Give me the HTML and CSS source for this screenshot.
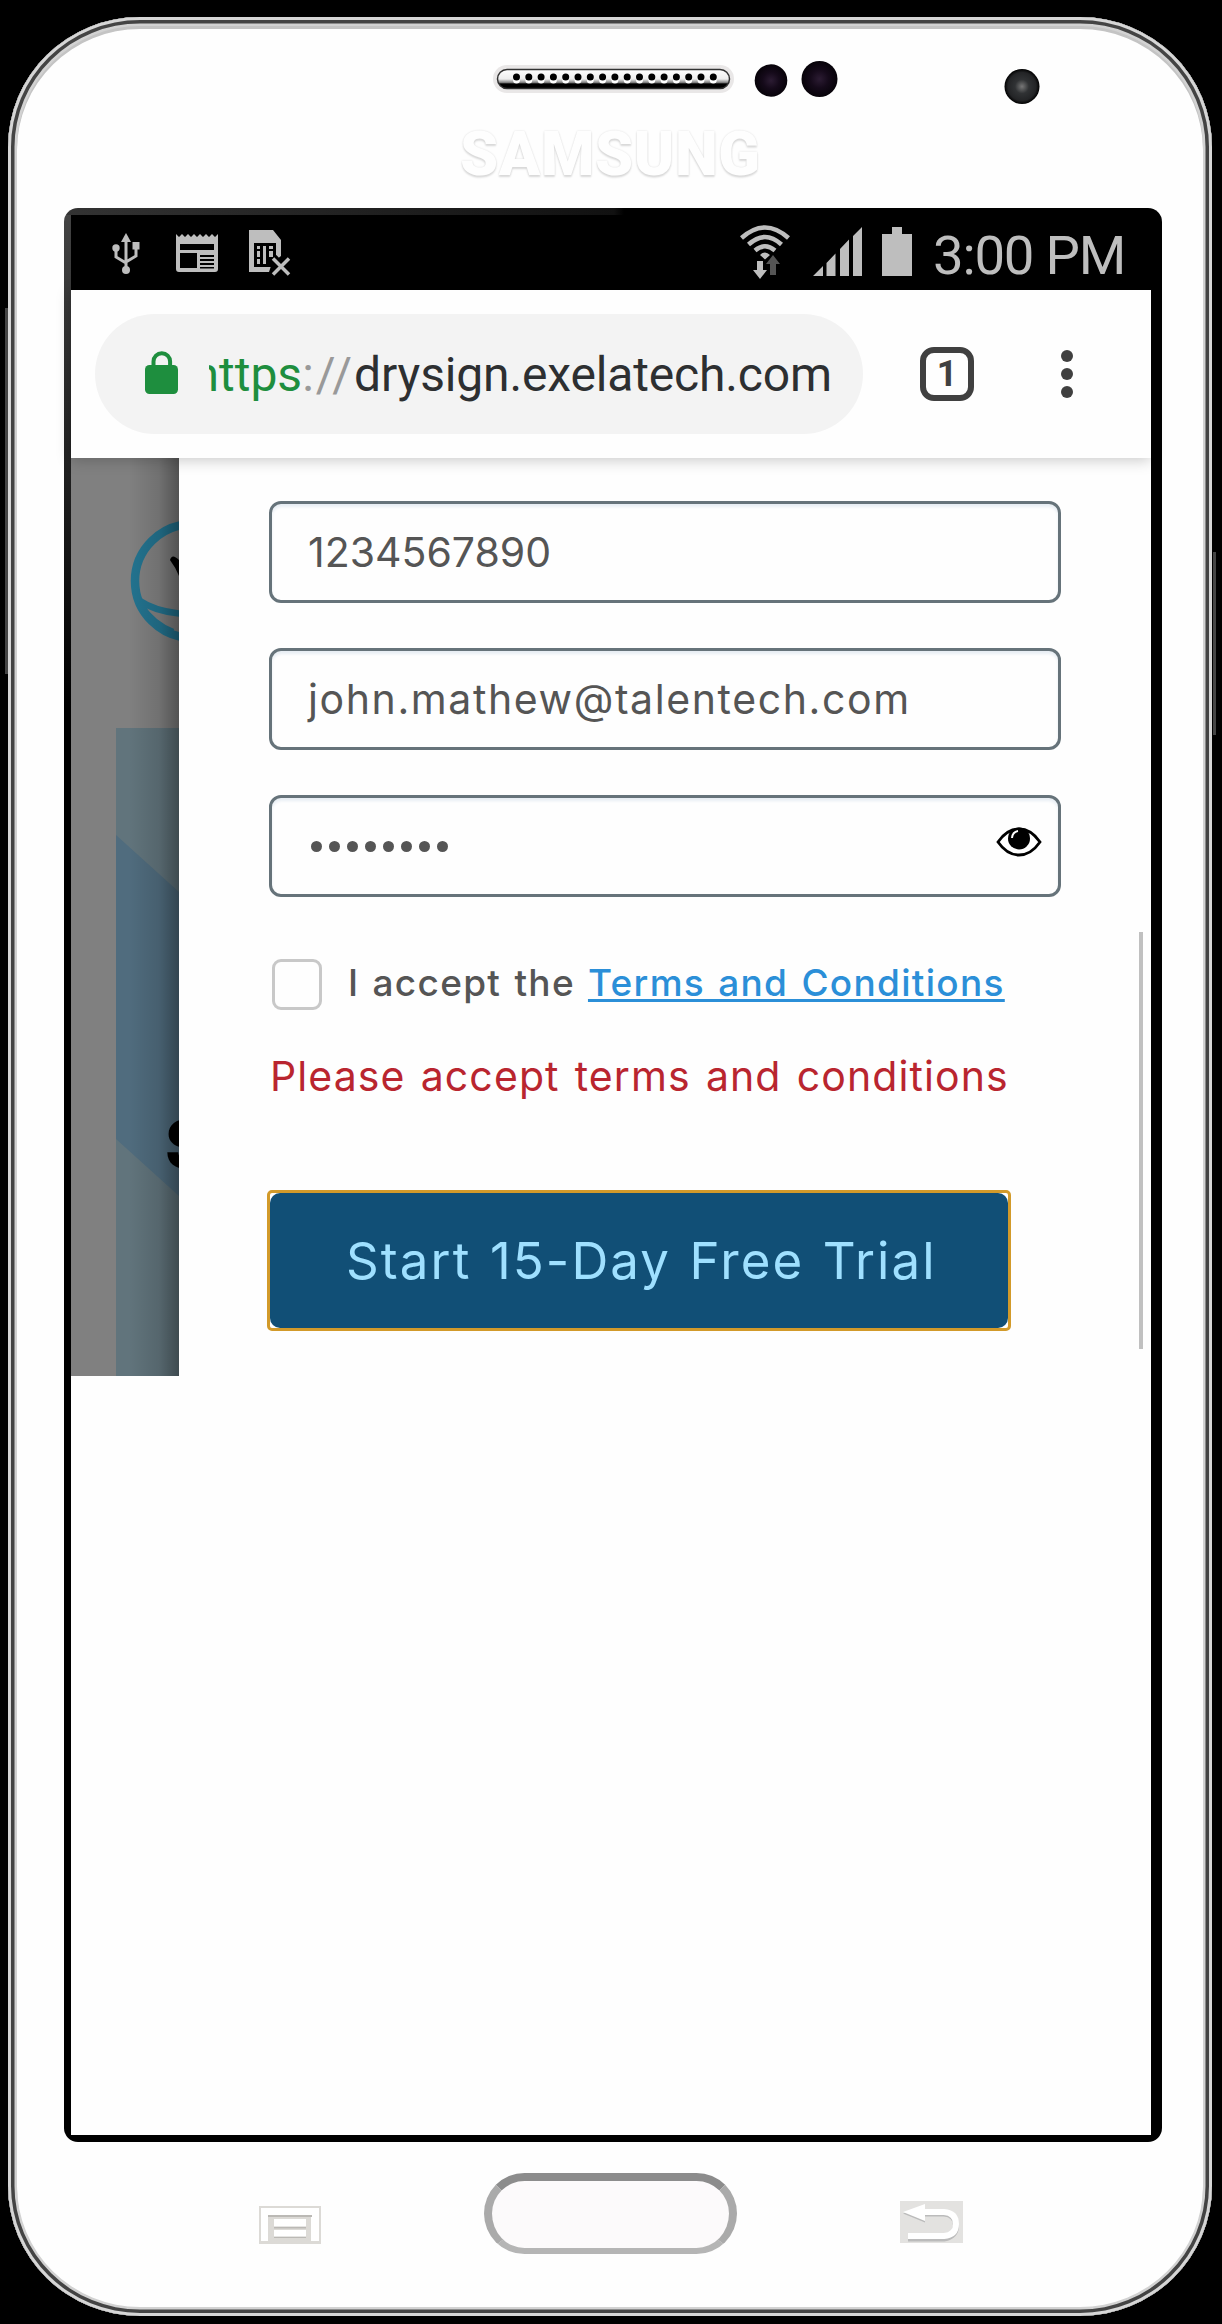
FILE: index.html
```html
<!DOCTYPE html>
<html lang="en">
<head>
<meta charset="utf-8">
<title>DrySign</title>
<link rel="stylesheet" href="styles.css">
</head>
<body>
<div class="phone">
  <i class="side-key side-key-left"></i>
  <i class="side-key side-key-right"></i>
  <svg class="hardware" viewBox="8 17 1204 107" width="1204" height="107" aria-hidden="true">
    <defs>
      <linearGradient id="grille" x1="0" y1="0" x2="0" y2="1">
        <stop offset="0" stop-color="#fff"/><stop offset=".5" stop-color="#eee"/>
        <stop offset=".68" stop-color="#888"/><stop offset=".76" stop-color="#000"/><stop offset="1" stop-color="#000"/>
      </linearGradient>
      <radialGradient id="lens"><stop offset="0" stop-color="#2c1c33"/><stop offset=".5" stop-color="#150a1a"/><stop offset="1" stop-color="#070309"/></radialGradient>
      <radialGradient id="camera"><stop offset="0" stop-color="#777"/><stop offset=".4" stop-color="#303234"/><stop offset=".8" stop-color="#232426"/><stop offset="1" stop-color="#000"/></radialGradient>
    </defs>
    <rect x="493" y="65" width="241" height="28" rx="14" fill="#e9e7e7"/>
    <rect x="497.500" y="69.500" width="232" height="19" rx="9.500" fill="url(#grille)" stroke="#333" stroke-width="1.500"/>
    <path d="M516.500 80H713.500" stroke="#fff" stroke-width="7" stroke-linecap="round" stroke-dasharray="0 12.300"/>
    <path d="M516.500 77H713.500" stroke="#000" stroke-width="7" stroke-linecap="round" stroke-dasharray="0 12.300"/>
    <circle cx="771" cy="80.500" r="16.300" fill="url(#lens)"/>
    <circle cx="819.500" cy="79" r="18" fill="url(#lens)"/>
    <circle cx="1022" cy="86.500" r="17.500" fill="url(#camera)"/>
  </svg>
  <div class="brand"><span>SAMSUNG</span></div>

  <div class="glass">
    <div class="screen">
      <div class="status">
        <svg width="30" height="44" viewBox="0 0 30 44" fill="#bebebe" stroke="#bebebe" class="usb">
          <path d="M15 1l5 9h-10z" stroke="none"/><path d="M15 8v30M5 17v8l10 6M25 16v8l-10 6" fill="none" stroke-width="3"/>
          <circle cx="5" cy="16" r="3.700" stroke="none"/><path d="M21.500 10h7v7.500h-7z" stroke="none"/><circle cx="15" cy="38" r="4" stroke="none"/>
        </svg>
        <svg width="42" height="40" viewBox="0 0 42 40" class="news">
          <path fill="#bebebe" d="M0 1l3 3 3-3 3 3 3-3 3 3 3-3 3 3 3-3 3 3 3-3 3 3 3-3 3 3 3-3V36q0 3-3 3H3q-3 0-3-3z"/>
          <path d="M4 11h34v6H4zM4 20h17v15H4zM24 22h14v2H24zM24 26h14v2H24zM24 30h14v2H24zM24 34h14v1.500H24z"/>
        </svg>
        <svg width="44" height="48" viewBox="0 0 44 48" class="sim">
          <path fill="#bebebe" d="M1 1h24l8 10v16l-9 7-3 9H1z"/>
          <path d="M6 14h22v24H6z"/>
          <path fill="#bebebe" d="M9 17h3v3H9zM9 22h3v6H9zM9 30h3v5H9zM15 17h3v18h-3zM21 17h4v3h-4zM21 22h4v6h-4z"/>
          <path fill="none" stroke="#000" stroke-width="9" d="M25 29l16 17M41 29L25 46"/>
          <path fill="none" stroke="#bebebe" stroke-width="3.500" d="M25 29.500l16 16M41 29.500l-16 16"/>
        </svg>
        <svg width="50" height="54" viewBox="0 0 50 54" class="wifi">
          <path d="M1.500 13Q25-8 48.500 13M8.500 19.500Q25 4.500 41.500 19.500M15 25.500Q25 17 35 25.500" fill="none" stroke="#bebebe" stroke-width="4.500"/>
          <path fill="#bebebe" d="M20 30q5-5 10 0l-5 4.500zM17 36h6v9h4l-7 9-7-9h4z"/>
          <path fill="#555" d="M30 50h6V39h4l-7-9-7 9h4z"/>
        </svg>
        <svg width="50" height="50" viewBox="0 0 50 50" class="signal" fill="#bebebe">
          <path d="M0 49l10-10v10zM13.500 36l9-9.500V49h-9zM27 22l9-9.500V49h-9zM40 9l9-9v49h-9z"/>
        </svg>
        <svg width="30" height="49" viewBox="0 0 30 49" class="battery" fill="#bebebe"><path d="M0 7h10V0h10v7h10v42H0z"/></svg>
        <span class="clock">3:00 PM</span>
      </div>

      <div class="toolbar">
        <div class="omnibox">
          <svg width="34" height="44" viewBox="0 0 34 44" class="lock">
            <path d="M8.500 16V10.500a8.300 8.300 0 0 1 16.600 0V16" fill="none" stroke="#1e8e3e" stroke-width="4"/>
            <rect y="14" width="33" height="29" rx="4.500" fill="#1e8e3e"/>
          </svg>
          <span class="url"><span class="scheme">https</span><span class="sep">://</span><span class="host">drysign.exelatech.com</span></span>
        </div>
        <span class="tabs">1</span>
        <span class="menu"><i></i><i></i><i></i></span>
      </div>

      <div class="viewport">
        <div class="backdrop">
          <svg width="108" height="918" viewBox="71 458 108 918">
            <defs><linearGradient id="edge"><stop offset="0" stop-color="#000" stop-opacity="0"/><stop offset=".6" stop-color="#000" stop-opacity=".12"/><stop offset="1" stop-color="#000" stop-opacity=".36"/></linearGradient></defs>
            <rect x="71" y="458" width="108" height="918" fill="#808080"/>
            <g fill="none" stroke="#23738f" stroke-width="8.500">
              <ellipse cx="193" cy="581" rx="58" ry="57"/><path d="M140 601q16 11 45 13M139 604q14 20 34 28" stroke-width="6.500"/>
            </g>
            <path d="M170 560q2-7 9 0v16q-3-8-9-16z"/>
            <rect x="116" y="728" width="63" height="648" fill="#61747c"/>
            <path d="M116 835l63 57v304l-63-57z" fill="#506c7e"/>
            <text x="165" y="1168" class="hero-title">S</text>
            <rect x="129" y="458" width="50" height="918" fill="url(#edge)"/>
          </svg>
        </div>
        <form class="panel">
          <label class="field"><span class="phone-no">1234567890</span></label>
          <label class="field"><span class="email">john.mathew@talentech.com</span></label>
          <label class="field password">
            <span class="dots"><i></i><i></i><i></i><i></i><i></i><i></i><i></i><i></i></span>
            <svg width="46" height="30" viewBox="0 0 46 30" class="eye">
              <path d="M2 15Q11 2 23 2t21 13Q35 28 23 28T2 15z" fill="#fff" stroke="#000" stroke-width="2.800"/>
              <circle cx="23" cy="11.500" r="11"/><path d="M16 11q.5-6 6-7" fill="none" stroke="#fff" stroke-width="2"/>
            </svg>
          </label>
          <div class="consent"><i class="box"></i><span class="accept">I accept the</span><a class="terms">Terms and Conditions</a></div>
          <p class="error">Please accept terms and conditions</p>
          <div class="cta"><span class="go">Start 15-Day Free Trial</span></div>
        </form>
        <i class="scroll"></i>
      </div>
    </div>
  </div>

  <div class="keys">
    <svg width="62" height="38" viewBox="0 0 62 38" class="recent">
      <path d="M0 0h62v38H0z" fill="#dcdad6"/><path d="M2 2h58v33h-8V9H9v26H2z" fill="#fff"/>
      <path d="M9 9h44v2H9zM15 20.500h32v2H15zM15 30.500h32v1.500H15z" fill="#bbb9b5"/><path d="M15 13h32v7.500H15zM15 24h32v6.500H15z" fill="#fff"/>
    </svg>
    <div class="home"></div>
    <svg width="63" height="42" viewBox="0 0 63 42" class="back">
      <path d="M0 0h63v42H0z" fill="#e3e2e0"/>
      <g transform="translate(0 1.500)" fill="none" stroke="#bbb"><path d="M24 11h20q12 1 12 12t-12 13H8" stroke-width="6"/><path d="M3 11l22-8v17z" fill="#bbb" stroke="none"/></g>
      <path d="M24 11h20q12 1 12 12t-12 12H8" fill="none" stroke="#fff" stroke-width="6"/><path d="M3 11l22-8v17z" fill="#fff"/>
    </svg>
  </div>
</div>
</body>
</html>
```
FILE: styles.css
```css
* { box-sizing: border-box; }
body { margin: 0; padding: 17px 0 0 8px; height: 2324px; background: #000; overflow: hidden; font-family: Inter, "Open Sans", sans-serif; }
svg { display: block; flex: none; }

.phone {
  position: relative; width: 1204px; height: 2299px; background: #fefefe; border-radius: 132px / 130px;
  box-shadow: inset 0 0 0 3px #d6d6d6, inset 0 0 0 6.500px #444, inset 0 0 0 9px #d2d2d2, inset 0 3px 0 9px #c4c4c4;
}
.side-key { position: absolute; width: 3px; background: #444; }
.side-key-left { left: -3px; top: 291px; height: 366px; }
.side-key-right { right: -4px; top: 535px; height: 183px; }

.brand {
  height: 84px; padding-left: 452px; line-height: 60px; white-space: nowrap;
  font-family: Roboto, sans-serif; font-weight: 900; font-size: 61px; letter-spacing: .6px; color: #fefefe;
  text-shadow: 0 2px 2px #d8d8d8, 0 0 2px #dedede;
}

.glass {
  width: 1098px; margin-left: 56px; padding: 7px 11px 7px 7px; border-radius: 14px;
  background: linear-gradient(90deg, #333, #111 550px, #000 560px) top / 100% 7px no-repeat, linear-gradient(#444, #000 500px) left / 7px 100% no-repeat, #000;
}
.screen { width: 1080px; height: 1920px; background: #fefefe; }

.status { display: flex; align-items: flex-start; height: 75px; padding-left: 40px; background: #000; }
.usb { margin-top: 17px; }
.news { margin: 18px 0 0 35px; }
.sim { margin: 14px 0 0 30px; }
.wifi { margin: 10px 0 0 448px; }
.signal { margin: 12px 0 0 23px; }
.battery { margin: 12px 0 0 19px; }
.clock { margin-left: 21px; line-height: 81px; font-family: Roboto, sans-serif; font-size: 54.500px; letter-spacing: -1.200px; color: #bebebe; white-space: nowrap; }

.toolbar { position: relative; z-index: 2; display: flex; align-items: center; height: 168px; padding-left: 24px; background: #fefefe; box-shadow: 0 2px 14px rgba(0,0,0,.22); }
.omnibox { display: flex; align-items: center; width: 768px; height: 120px; padding-left: 50px; border-radius: 60px; background: #f3f3f3; }
.lock { margin-bottom: 3px; }
.url { display: flex; justify-content: flex-end; width: 623px; margin: 2px 0 0 30px; overflow: hidden; font-family: Roboto, sans-serif; font-size: 48px; line-height: 64px; white-space: nowrap; }
.scheme { color: #1e8e3e; }
.sep { letter-spacing: 2px; color: #999; }
.host { letter-spacing: -.150px; color: #2d2f31; }
.tabs { width: 54px; height: 54px; margin-left: 57px; border: 6px solid #404040; border-radius: 14px; font: 700 36px/43px Roboto, sans-serif; text-align: center; color: #404040; }
.menu { display: flex; flex-direction: column; gap: 6px; margin-left: 87px; }
.menu i { width: 12px; height: 12px; border-radius: 50%; background: #404040; }

.viewport { position: relative; display: flex; height: 918px; }
.hero-title { font: 800 66px Inter, sans-serif; }
.panel { width: 972px; padding: 43px 0 0 90px; color: #555; }
.field { display: flex; align-items: center; width: 792px; height: 102px; margin-bottom: 45px; padding-left: 36px; border: 3px solid #66737a; border-radius: 12px; box-shadow: inset 0 3px 3px #e8eef4; font-size: 41px; }
.email { letter-spacing: 1.600px; }
.dots { display: flex; gap: 7px; margin-left: 3px; }
.dots i { width: 11px; height: 11px; border-radius: 50%; background: #555; }
.eye { margin: 0 0 8px 548px; }
.consent { display: flex; align-items: center; height: 51px; margin: 62px 0 0 3px; font-size: 37px; font-weight: 500; white-space: nowrap; }
.box { width: 50px; height: 51px; border: 3px solid #c8c8c8; border-radius: 9px; }
.accept, .terms { letter-spacing: 1.300px; word-spacing: 2px; padding-bottom: 5px; }
.accept { margin-left: 26px; }
.terms { margin-left: 13px; color: #2b8fd8; text-decoration: underline; text-decoration-thickness: 3px; text-underline-offset: 3px; text-decoration-skip-ink: none; }
.error { margin: 39px 0 0 1px; font-size: 41px; line-height: 54px; letter-spacing: 1.100px; word-spacing: 2.500px; color: #b9252f; white-space: nowrap; }
.cta { width: 744px; height: 141px; margin: 87px 0 0 -2px; border: 3px solid #d29a2a; border-radius: 5px; }
.go { display: block; padding-left: 76px; border-radius: 10px; background: #114f76; font-size: 51px; line-height: 135px; letter-spacing: 2.100px; word-spacing: 2px; color: #9fe0ff; white-space: nowrap; }
.scroll { position: absolute; right: 8px; top: 474px; width: 4px; height: 417px; background: #c0c0c0; }

.keys { display: flex; align-items: flex-start; }
.recent { margin: 64px 0 0 251px; }
.home { width: 253px; height: 81px; margin: 31px 0 0 163px; border: 8px solid; border-width: 8px 8px 6px; border-color: #8c8c8c #aaa #b5b5b5; border-radius: 41px; background: #fcfafb; }
.back { margin: 59px 0 0 163px; }
```
